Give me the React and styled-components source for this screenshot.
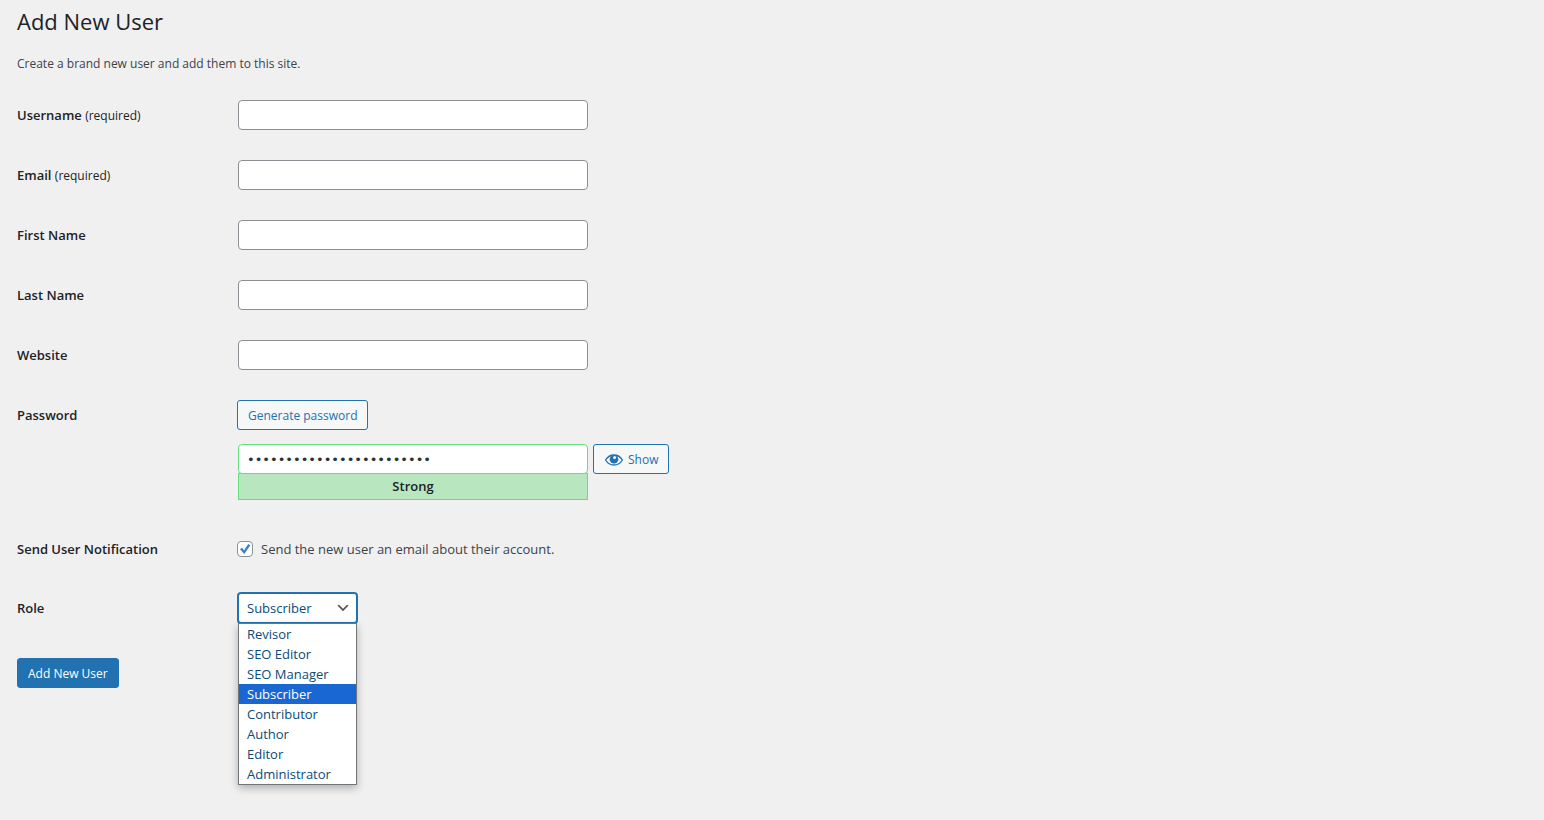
import React from 'react';
import styled, { createGlobalStyle } from 'styled-components';

const GlobalStyle = createGlobalStyle`
  *, *::before, *::after { box-sizing: border-box; }
  body {
    margin: 0;
    background: #f0f0f1;
    color: #3c434a;
    font-family: "Open Sans", "Noto Sans", sans-serif;
    font-size: 13px;
    line-height: 20px;
  }
  button, input, select { font: inherit; }
`;

const Page = styled.main`
  min-height: 100vh;
  padding: 7px 17px 32px;
`;

const Title = styled.h1`
  margin: 0;
  color: #1d2327;
  font-size: 22px;
  font-weight: 400;
  line-height: 28px;
`;

const Intro = styled.p`
  margin: 19px 0 11px;
  font-size: 12px;
`;

const Row = styled.div`
  display: grid;
  grid-template-columns: 220px minmax(0, 1fr);
  align-items: start;
  padding: 15px 0;
`;

const Label = styled.label`
  padding-top: 5px;
  color: #1d2327;
  font-weight: 600;
`;

const Required = styled.span`
  font-size: 12px;
  font-weight: 500;
`;

const TextInput = styled.input`
  display: block;
  width: 350px;
  max-width: 100%;
  height: 30px;
  margin: 0 1px;
  padding: 0 8px;
  border: 1px solid #8c8f94;
  border-radius: 4px;
  background: #fff;
  color: #2c3338;
  outline: none;
`;

const PasswordInput = styled(TextInput)`
  border-color: #68de7c;
  font-family: "DejaVu Sans", sans-serif;
`;

const Button = styled.button`
  display: inline-flex;
  align-items: center;
  justify-content: center;
  gap: 4px;
  height: 30px;
  padding: 2px 10px 0;
  border: 1px solid #2271b1;
  border-radius: 3px;
  background: ${(p) => (p.$primary ? '#2271b1' : '#f6f7f7')};
  color: ${(p) => (p.$primary ? '#fff' : '#2271b1')};
  font-size: 12px;
  font-weight: ${(p) => (p.$primary ? 500 : 400)};
  white-space: nowrap;
  cursor: pointer;
`;

const PasswordLine = styled.div`
  display: flex;
  align-items: flex-start;
  gap: 4px;
  margin-top: 14px;
`;

const Strength = styled.div`
  width: 350px;
  max-width: 100%;
  height: 27px;
  margin: -1px 1px 4px;
  border: 1px solid #68de7c;
  background: #b8e6bf;
  color: #1d2327;
  font-weight: 600;
  line-height: 25px;
  text-align: center;
`;

const CheckLine = styled.label`
  display: flex;
  align-items: center;
  gap: 8px;
  padding: 5px 0 4px;
`;

const CheckWrap = styled.span`
  display: grid;
  width: 16px;
  height: 16px;

  > * { grid-area: 1 / 1; }
  svg { pointer-events: none; }
`;

const Checkbox = styled.input`
  appearance: none;
  width: 16px;
  height: 16px;
  margin: 0;
  border: 1px solid #8c8f94;
  border-radius: 4px;
  background: #fff;

  &:not(:checked) + svg { display: none; }
`;

const SelectWrap = styled.div`
  position: relative;
  width: 119px;
  margin: 0 1px;
`;

const Select = styled.select`
  appearance: none;
  display: block;
  width: 100%;
  height: 30px;
  padding: 0 24px 0 8px;
  border: 1px solid #2271b1;
  border-radius: 3px;
  background: #fff;
  box-shadow: 0 0 0 1px #2271b1;
  color: #0a4b78;
  outline: none;
`;

const Chevron = styled.svg`
  position: absolute;
  top: 7px;
  right: 6px;
  pointer-events: none;
`;

const Options = styled.ul`
  position: absolute;
  top: 100%;
  left: 0;
  right: 0;
  margin: 0;
  padding: 0;
  border: 1px solid #70757a;
  background: #fff;
  box-shadow: 0 3px 8px rgba(0, 0, 0, 0.28);
  list-style: none;
`;

const Option = styled.li`
  height: 20px;
  padding: 0 8px;
  background: ${(p) => (p.$selected ? '#1967d2' : 'transparent')};
  color: ${(p) => (p.$selected ? '#fff' : '#0a4b78')};
  white-space: nowrap;
`;

const Submit = styled.div`
  padding-top: 20px;
`;

const fields = [
  { id: 'username', label: 'Username', required: true },
  { id: 'email', label: 'Email', required: true, type: 'email' },
  { id: 'first-name', label: 'First Name' },
  { id: 'last-name', label: 'Last Name' },
  { id: 'website', label: 'Website', type: 'url' },
];

const roles = [
  'Revisor',
  'SEO Editor',
  'SEO Manager',
  'Subscriber',
  'Contributor',
  'Author',
  'Editor',
  'Administrator',
];

const EyeIcon = () => (
  <svg width="20" height="20" viewBox="0 0 20 20" aria-hidden="true">
    <path
      d="M1.600 10C3.500 6.800 6.500 5 10 5s6.500 1.800 8.400 5c-1.900 3.200-4.900 5-8.400 5s-6.500-1.800-8.400-5z"
      fill="none"
      stroke="currentColor"
      strokeWidth="1.300"
    />
    <circle cx="10" cy="9.300" r="4.300" fill="currentColor" />
    <circle cx="10.600" cy="7.400" r="1.500" fill="#f6f7f7" />
  </svg>
);

export default function App() {
  const [role, setRole] = React.useState('Subscriber');

  return (
    <Page>
      <GlobalStyle />
      <Title>Add New User</Title>
      <Intro>Create a brand new user and add them to this site.</Intro>
      <form onSubmit={(e) => e.preventDefault()}>
        {fields.map((f) => (
          <Row key={f.id}>
            <Label htmlFor={f.id}>
              {f.label} {f.required && <Required>(required)</Required>}
            </Label>
            <TextInput id={f.id} type={f.type || 'text'} />
          </Row>
        ))}
        <Row>
          <Label htmlFor="password">Password</Label>
          <div>
            <Button type="button">Generate password</Button>
            <PasswordLine>
              <PasswordInput
                id="password"
                type="password"
                defaultValue="q7#Lw9!tRz2&Vb5xKm8^Yp3d"
              />
              <Button type="button">
                <EyeIcon />
                Show
              </Button>
            </PasswordLine>
            <Strength>Strong</Strength>
          </div>
        </Row>
        <Row>
          <Label htmlFor="notify">Send User Notification</Label>
          <CheckLine>
            <CheckWrap>
              <Checkbox id="notify" type="checkbox" defaultChecked />
              <svg width="16" height="16" viewBox="0 0 16 16" aria-hidden="true">
                <path d="M3 8.200l2-1.400 2 2.600L11.200 3l2.100 1.300L7.300 13z" fill="#3582c4" />
              </svg>
            </CheckWrap>
            Send the new user an email about their account.
          </CheckLine>
        </Row>
        <Row>
          <Label htmlFor="role">Role</Label>
          <SelectWrap>
            <Select id="role" value={role} onChange={(e) => setRole(e.target.value)}>
              {roles.map((r) => (
                <option key={r}>{r}</option>
              ))}
            </Select>
            <Chevron width="16" height="16" viewBox="0 0 20 20" aria-hidden="true">
              <path d="M5 6l5 5 5-5 2 1-7 7-7-7 2-1z" fill="#555" />
            </Chevron>
            <Options role="listbox" aria-label="Role">
              {roles.map((r) => (
                <Option
                  key={r}
                  role="option"
                  aria-selected={r === role}
                  $selected={r === role}
                  onClick={() => setRole(r)}
                >
                  {r}
                </Option>
              ))}
            </Options>
          </SelectWrap>
        </Row>
        <Submit>
          <Button type="submit" $primary>
            Add New User
          </Button>
        </Submit>
      </form>
    </Page>
  );
}
